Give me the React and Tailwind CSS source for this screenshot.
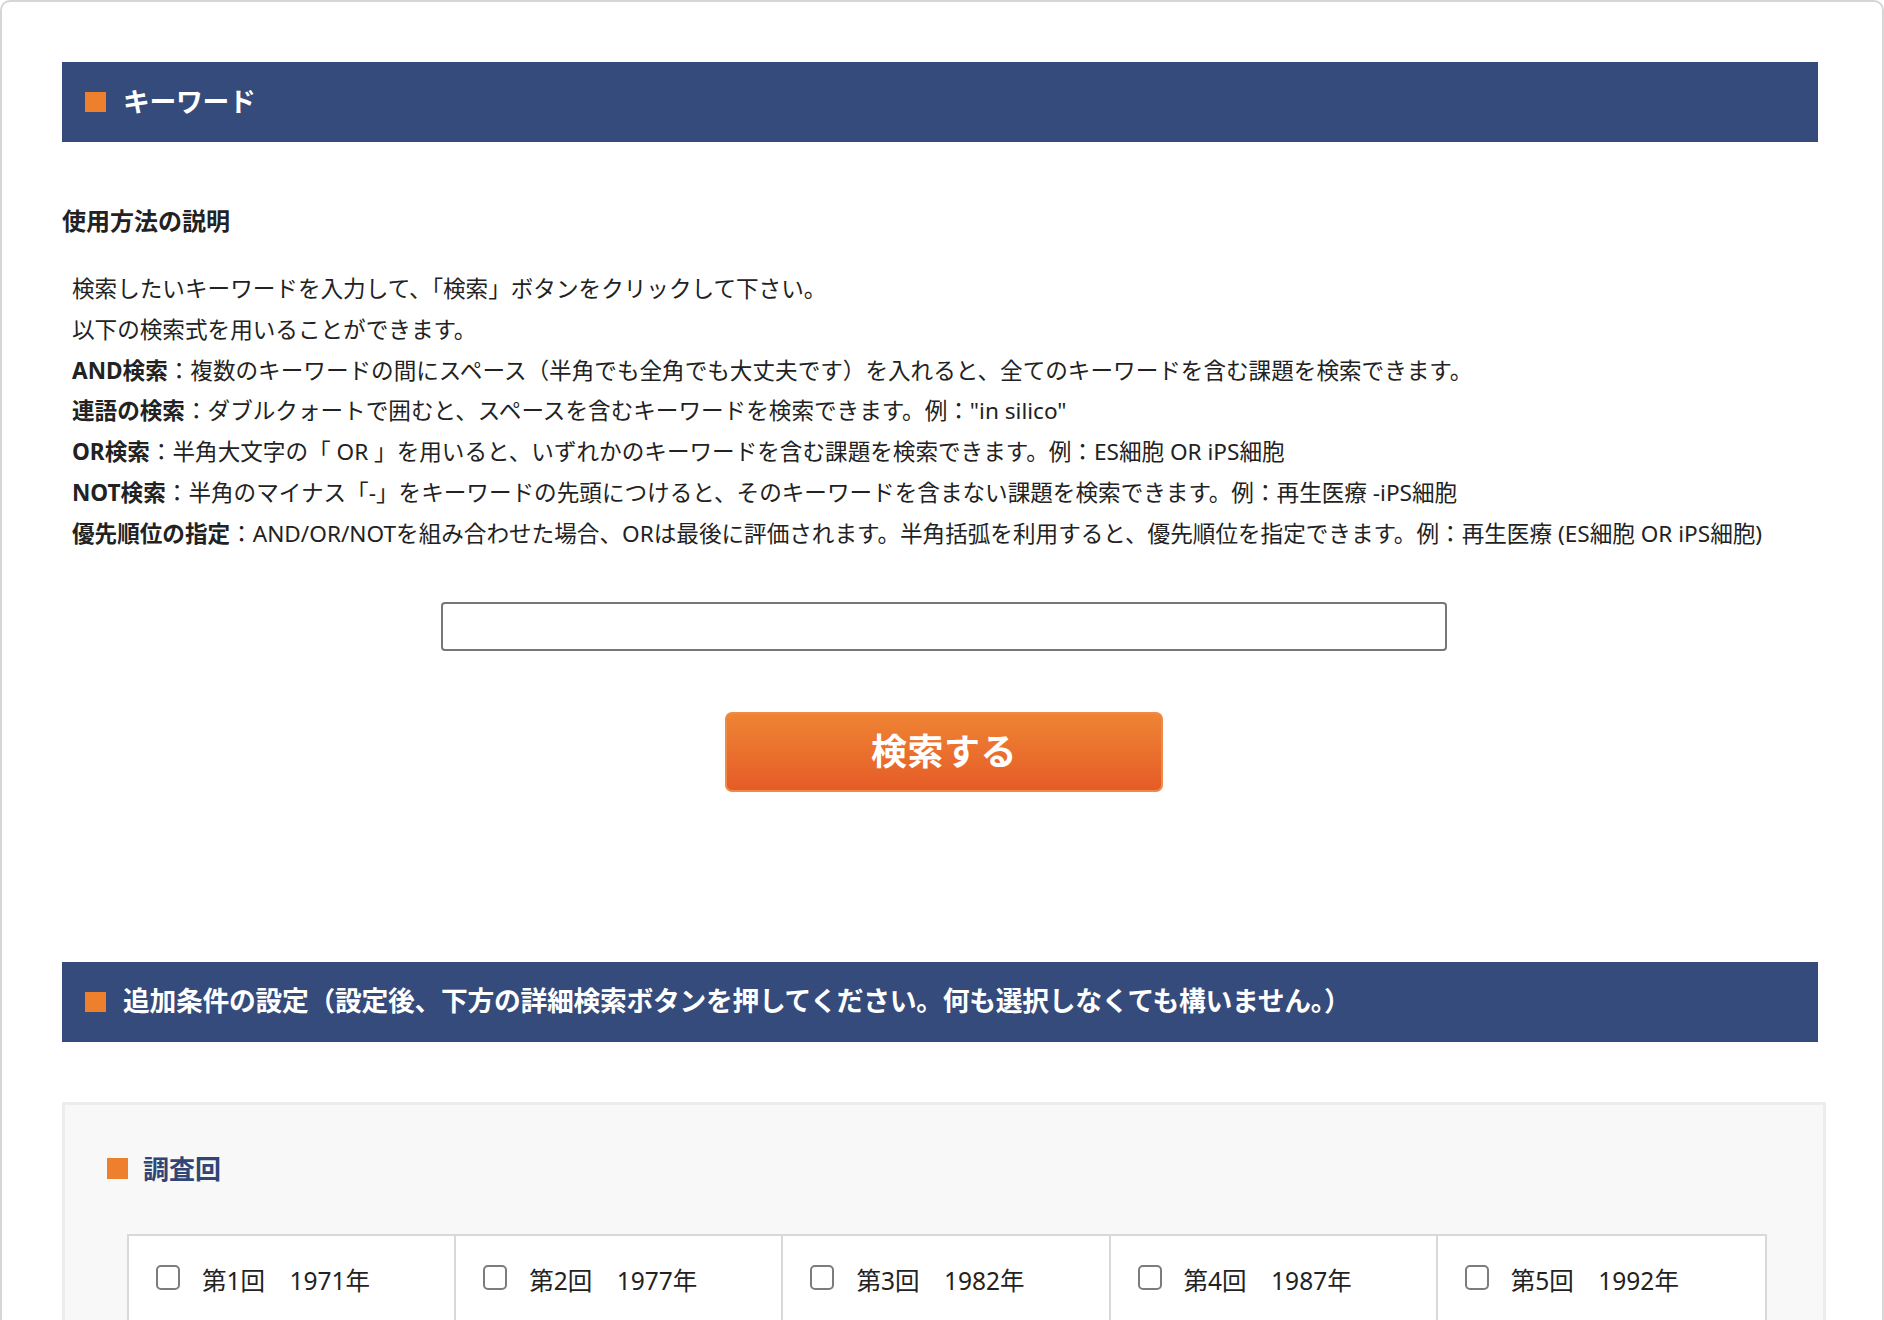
const rules = [
  { label: 'AND検索', text: '：複数のキーワードの間にスペース（半角でも全角でも大丈夫です）を入れると、全てのキーワードを含む課題を検索できます。' },
  { label: '連語の検索', text: '：ダブルクォートで囲むと、スペースを含むキーワードを検索できます。例："in silico"' },
  { label: 'OR検索', text: '：半角大文字の「 OR 」を用いると、いずれかのキーワードを含む課題を検索できます。例：ES細胞 OR iPS細胞' },
  { label: 'NOT検索', text: '：半角のマイナス「-」をキーワードの先頭につけると、そのキーワードを含まない課題を検索できます。例：再生医療 -iPS細胞' },
  { label: '優先順位の指定', text: '：AND/OR/NOTを組み合わせた場合、ORは最後に評価されます。半角括弧を利用すると、優先順位を指定できます。例：再生医療 (ES細胞 OR iPS細胞)' },
];

const rounds = [
  { no: 1, year: 1971 },
  { no: 2, year: 1977 },
  { no: 3, year: 1982 },
  { no: 4, year: 1987 },
  { no: 5, year: 1992 },
];

function SectionBar({ children }) {
  return (
    <div className="w-[1756px] h-[80px] bg-[#354b7b] flex items-center pl-[23px]">
      <span className="w-[21px] h-[20px] bg-[#ee7f2d] shrink-0" />
      <h2 className="ml-[17px] text-white font-bold text-[26.8px] leading-none tracking-[-0.3px]">{children}</h2>
    </div>
  );
}

function RoundCell({ round, last }) {
  return (
    <label className={`flex items-start gap-[22px] pl-[27px] pt-[29px] pb-[40px] ${last ? '' : 'border-r-2 border-[#d9d9d9]'}`}>
      <span className="w-[24px] h-[25px] rounded-[5px] border-2 border-[#7c7c7c] bg-white shrink-0" />
      <span className="text-[24.5px] leading-[34px] -mt-[1px] text-[#222]">
        第{round.no}回　{round.year}年
      </span>
    </label>
  );
}

export default function App() {
  return (
    <div className="h-[1320px] overflow-hidden bg-white font-['Noto_Sans','Noto_Sans_CJK_JP',sans-serif] text-[#222]">
      <div className="border-2 border-[#d6d6d6] rounded-t-[10px] pt-[60px] pl-[60px] pr-[56px] min-h-[1400px]">
        <SectionBar>キーワード</SectionBar>

        <h3 className="mt-[61px] text-[24px] leading-[36px] font-bold">使用方法の説明</h3>

        <div className="mt-[30px] pl-[10px] text-[22.6px] leading-[40.8px]">
          <p>検索したいキーワードを入力して、「検索」ボタンをクリックして下さい。</p>
          <p>以下の検索式を用いることができます。</p>
          {rules.map((r) => (
            <p key={r.label}>
              <span className="font-bold">{r.label}</span>
              {r.text}
            </p>
          ))}
        </div>

        <input
          type="text"
          className="block mt-[47px] mx-auto w-[1006px] h-[49px] border-2 border-[#777] rounded-[4px] bg-white px-3 text-[20px] outline-none"
        />

        <button className="block mt-[61px] mx-auto w-[438px] h-[80px] rounded-[7px] border-2 border-[#ef8a48] bg-gradient-to-b from-[#ee8434] to-[#e55b27] text-white font-bold text-[36px] tracking-[0.5px]">
          検索する
        </button>

        <div className="mt-[170px]">
          <SectionBar>追加条件の設定（設定後、下方の詳細検索ボタンを押してください。何も選択しなくても構いません。）</SectionBar>
        </div>

        <div className="mt-[60px] border-[3px] border-[#ececec] bg-[#f8f8f8] pt-[46px] pb-[40px]">
          <div className="flex items-center ml-[42px] h-[36px]">
            <span className="w-[21px] h-[21px] bg-[#ee7f2d]" />
            <h3 className="ml-[15px] text-[26px] font-bold text-[#2f4676] leading-none">調査回</h3>
          </div>

          <div className="mt-[47px] ml-[62px] w-[1640px] bg-white border-2 border-[#d9d9d9] grid grid-cols-5">
            {rounds.map((r, i) => (
              <RoundCell key={r.no} round={r} last={i === rounds.length - 1} />
            ))}
          </div>
        </div>
      </div>
    </div>
  );
}
